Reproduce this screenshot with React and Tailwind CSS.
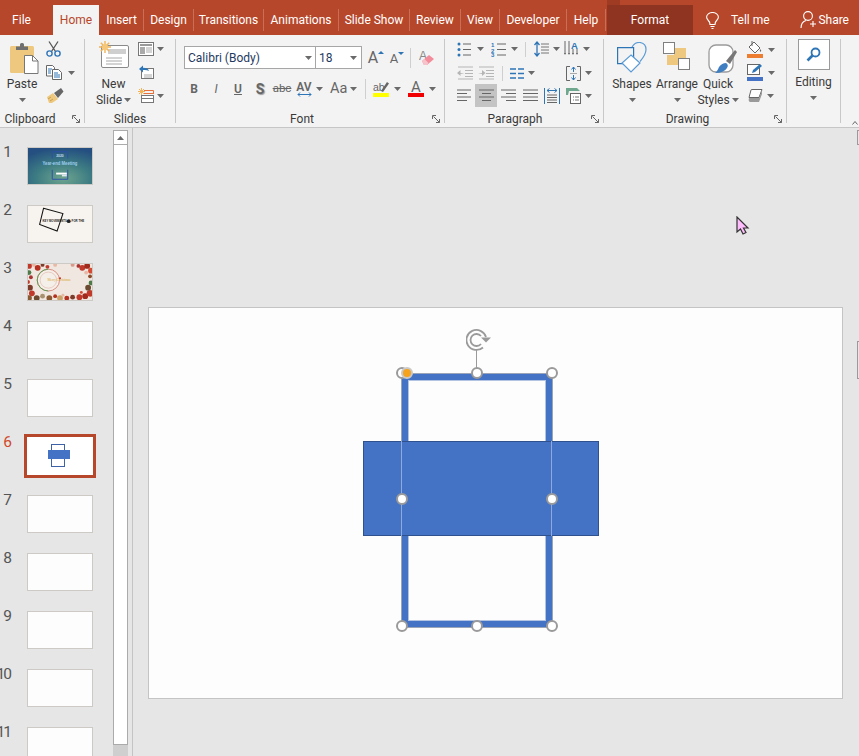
import React from "react";

const Caret = ({ className = "" }) => (
  <svg width="7" height="4" viewBox="0 0 7 4" className={`shrink-0 ${className}`}><path d="M0 0h7L3.5 4z" fill="#6a6a6a" /></svg>
);

const VSep = ({ className = "" }) => <div className={`w-px bg-[#cfcfcf] shrink-0 ${className}`} />;

const Launcher = () => (
  <svg width="9" height="9" viewBox="0 0 9 9" className="shrink-0">
    <path d="M.5 4V.5H4M1.5 1.5l6 6M7.5 4v3.500H4" fill="none" stroke="#666" strokeWidth="1" />
  </svg>
);

const Group = ({ label, w, launcher, labelClass = "", children }) => (
  <div className={`flex flex-col shrink-0 h-[84px] mt-[4px] border-r border-[#c8c8c8] ${w}`}>
    <div className="h-[72px] flex shrink-0">{children}</div>
    <div className="flex items-center h-[16px] shrink-0">
      <span className={`flex-1 text-center text-[12px] leading-[16px] text-[#3a3a3a] ${labelClass}`}>{label}</span>
      {launcher && (
        <span className="w-[12px] flex justify-start shrink-0"><Launcher /></span>
      )}
    </div>
  </div>
);

const Paste = () => (
  <svg width="29" height="32" viewBox="0 0 29 32">
    <rect x="0" y="4" width="24" height="27" rx="1.5" fill="#EDC87E" />
    <path d="M6 8V4.5h4V2.5q0-1.5 1.5-1.5h1Q14 1 14 2.500V4.500h4V8z" fill="#6f6f6f" />
    <path d="M14.500 13.500h8l5.500 5.500v12.500h-13.500z" fill="#fff" stroke="#777" />
    <path d="M22.500 13.500V19H28" fill="none" stroke="#777" />
  </svg>
);
const Scissors = () => (
  <svg width="15" height="16" viewBox="0 0 15 16">
    <path d="M3 .5l6.500 10M12 .5L5.500 10.500" stroke="#555" strokeWidth="1.300" fill="none" />
    <circle cx="3.500" cy="12.500" r="2.600" fill="none" stroke="#2E75B6" strokeWidth="1.400" />
    <circle cx="11.500" cy="12.500" r="2.600" fill="none" stroke="#2E75B6" strokeWidth="1.400" />
  </svg>
);
const Copy = () => (
  <svg width="16" height="15" viewBox="0 0 16 15">
    <path d="M.5.500h6l2 2V11H.5z" fill="#fff" stroke="#666" />
    <path d="M6.500 4.500h6l3 3v7h-9z" fill="#fff" stroke="#666" />
    <path d="M2 4h4M2 6h3M2 8h3M8 8h4M8 10h6M8 12h6" stroke="#2E75B6" />
  </svg>
);
const Brush = () => (
  <svg width="18" height="15" viewBox="0 0 18 15">
    <path d="M1 9l6-4 5 6-6 4H3z" fill="#EDC87E" />
    <path d="M2 11l3-2M4 13l3-2" stroke="#c9a04e" />
    <path d="M8 5l7-5 2.500 3.500L12 10z" fill="#666" />
  </svg>
);
const NewSlide = () => (
  <svg width="30" height="27" viewBox="0 0 30 27">
    <rect x="2.500" y="4.500" width="27" height="22" rx="1.500" fill="#fff" stroke="#8a8a8a" />
    <rect x="9" y="8" width="18" height="5" fill="#cfcfcf" />
    <path d="M7 17h16M7 20h16M7 23h16" stroke="#a8a8a8" />
    <g stroke="#F2B457" strokeWidth="1.400">
      <path d="M6 0v12M0 6h12M1.800 1.800l8.400 8.400M10.200 1.800l-8.400 8.400" />
    </g>
    <circle cx="6" cy="6" r="3" fill="#F5C77A" />
  </svg>
);
const LayoutIcon = () => (
  <svg width="16" height="14" viewBox="0 0 16 14">
    <rect x=".5" y=".5" width="15" height="13" fill="#fff" stroke="#777" />
    <rect x="2" y="2" width="12" height="2" fill="#999" />
    <rect x="2" y="5" width="5" height="7" fill="#aaa" />
    <path d="M8 6h6M8 8h6M8 10h6" stroke="#aaa" />
  </svg>
);
const ResetIcon = () => (
  <svg width="16" height="14" viewBox="0 0 16 14">
    <rect x="3.500" y="3.500" width="12" height="10" fill="#fff" stroke="#777" />
    <path d="M6 10h8M6 12h8" stroke="#aaa" />
    <path d="M1 4l4-3.500v2.300q5 0 6 3.200-2.500-1.500-6-1v2.500z" fill="#2E75B6" />
  </svg>
);
const SectionIcon = () => (
  <svg width="16" height="15" viewBox="0 0 16 15">
    <g stroke="#F2B457"><path d="M3.500 0v7M0 3.500h7M1 1l5 5M6 1L1 6" /></g>
    <path d="M6 2.500h9.500V6M6 5.500h9" stroke="#E8703A" fill="none" />
    <rect x="3.500" y="7.500" width="12" height="7" fill="#fff" stroke="#777" />
    <path d="M3.500 10.500h12" stroke="#777" />
  </svg>
);
const Eraser = () => (
  <svg width="16" height="16" viewBox="0 0 16 16">
    <text x="0" y="10" fontSize="12" fill="#888" fontFamily="Liberation Sans">A</text>
    <path d="M3 11l7-6 5 4-7 6H5z" fill="#F28B9A" />
    <path d="M3 11l2.500-2 4 4L8 15H5z" fill="#F7C3CB" />
  </svg>
);
const Bullets = () => (
  <svg width="14" height="15" viewBox="0 0 14 15">
    <g fill="#2E75B6"><circle cx="2" cy="2" r="1.500" /><circle cx="2" cy="7.500" r="1.500" /><circle cx="2" cy="13" r="1.500" /></g>
    <path d="M6 2h8M6 7.500h8M6 13h8" stroke="#666" />
  </svg>
);
const Numbers = () => (
  <svg width="15" height="15" viewBox="0 0 15 15">
    <g fill="#2E75B6" fontSize="6" fontWeight="700" fontFamily="Liberation Sans"><text x="0" y="5">1</text><text x="0" y="10.500">2</text><text x="0" y="15">3</text></g>
    <path d="M6 2h9M6 7.500h9M6 13h9" stroke="#666" />
  </svg>
);
const Spacing = () => (
  <svg width="15" height="16" viewBox="0 0 15 16">
    <path d="M3 1v14M.5 4L3 1l2.500 3M.5 12L3 15l2.500-3" fill="none" stroke="#2E75B6" strokeWidth="1.300" />
    <path d="M7 3h8M7 6h8M7 9h8M7 12h8" stroke="#777" />
  </svg>
);
const TextDir = () => (
  <svg width="15" height="16" viewBox="0 0 15 16">
    <path d="M1 0v13M5 0v13M9 8v5M13 8v5" stroke="#666" />
    <path d="M0 12l1 2 1-2zM4 12l1 2 1-2zM8 12l1 2 1-2zM12 12l1 2 1-2z" fill="#666" />
    <text x="7" y="7.500" fontSize="9.500" fontWeight="700" fill="#2E75B6" fontFamily="Liberation Sans">A</text>
  </svg>
);
const Indent = ({ flip }) => (
  <svg width="16" height="14" viewBox="0 0 16 14">
    <path d="M1 1h15M8 4.500h8M8 7.500h8M8 10.500h8M1 13h15" stroke="#b5b5b5" />
    <path d={flip ? "M0 7h4V4l3.500 3L4 10V8z" : "M7.500 7h-4V4L0 7l3.500 3V8z"} fill="#b5b5b5" />
  </svg>
);
const Columns = () => (
  <svg width="14" height="11" viewBox="0 0 14 11">
    <path d="M0 1h6M8 1h6M0 5.500h6M8 5.500h6M0 10h6M8 10h6" stroke="#2E75B6" strokeWidth="1.300" />
  </svg>
);
const AlignText = () => (
  <svg width="15" height="15" viewBox="0 0 15 15">
    <path d="M4 .5H.5v14H4M11 .500h3.500v14H11" fill="none" stroke="#666" />
    <path d="M7.500 1v5M5.500 3.500l2-2.500 2 2.500M7.500 14V9M5.500 11.500l2 2.500 2-2.500" fill="none" stroke="#2E75B6" />
    <path d="M4 7.500h7" stroke="#aaa" />
  </svg>
);
const Align = ({ d }) => (
  <svg width="15" height="13" viewBox="0 0 15 13"><path d={d} stroke="#666" strokeWidth="1" fill="none" /></svg>
);
const Distribute = () => (
  <svg width="16" height="16" viewBox="0 0 16 16">
    <path d="M.5 0v16M15.500 0v16" stroke="#2E75B6" />
    <path d="M3 2.500h10M3 2.500l2.500-2M3 2.500l2.500 2M13 2.500l-2.500-2M13 2.500l-2.500 2" fill="none" stroke="#2E75B6" />
    <path d="M3 7h10M3 9.500h10M3 12h10M3 14.500h10" stroke="#666" />
  </svg>
);
const SmartArt = () => (
  <svg width="15" height="17" viewBox="0 0 15 17">
    <path d="M0 1h11l3 3H3l-1 4H0z" fill="#6FA78F" />
    <rect x="4.500" y="6.500" width="10" height="10" fill="#fff" stroke="#666" />
    <path d="M7 10h1M9 10h4M7 13h1M9 13h4" stroke="#777" />
  </svg>
);
const Shapes = () => (
  <svg width="30" height="31" viewBox="0 0 30 31">
    <path d="M15 5q3-5 8-4.500 6 .800 6 7 0 5-6 12" fill="none" stroke="#5B9BD5" strokeWidth="1.200" />
    <path d="M.6 5.600h16v16H.6z" fill="none" stroke="#2E75B6" strokeWidth="1.200" />
    <path d="M14 13l9 8-9 9-9-9z" fill="#fff" stroke="#5B9BD5" strokeWidth="1.200" />
  </svg>
);
const Arrange = () => (
  <svg width="28" height="28" viewBox="0 0 28 28">
    <rect x="11" y="6" width="12" height="12" fill="#EDC87E" />
    <rect x="4" y="13" width="12" height="10" fill="#EDC87E" />
    <rect x=".5" y=".5" width="11" height="11" fill="#fff" stroke="#7f7f7f" />
    <rect x="15.500" y="16.500" width="11" height="11" fill="#fff" stroke="#7f7f7f" />
  </svg>
);
const QuickStyles = () => (
  <svg width="30" height="30" viewBox="0 0 30 30">
    <rect x="1" y="1" width="24" height="27" rx="7" fill="#fff" stroke="#9a9a9a" strokeWidth="1.300" />
    <path d="M18 17L27 6l2 2-7 12z" fill="#777" />
    <path d="M7 29q2-1 4-6 3-4 7-4 3 2 1 5-3 5-12 5z" fill="#3F7FC1" />
  </svg>
);
const FillIcon = () => (
  <svg width="16" height="17" viewBox="0 0 16 17">
    <path d="M7 1l6 6-5 5-6-6z" fill="#fff" stroke="#666" />
    <path d="M5 0v5" stroke="#666" />
    <path d="M13.500 8q1.500 2 0 3-1.500-1-0-3z" fill="#666" />
    <rect x="0" y="13" width="16" height="4" fill="#ED7D31" />
  </svg>
);
const LineIcon = () => (
  <svg width="16" height="17" viewBox="0 0 16 17">
    <rect x=".5" y=".5" width="12" height="10" fill="#fff" stroke="#666" />
    <path d="M5 9l1-3 7-6 2 2-7 6z" fill="#2E75B6" />
    <rect x="0" y="13" width="16" height="4" fill="#4472C4" />
  </svg>
);
const Effects = () => (
  <svg width="16" height="14" viewBox="0 0 16 14">
    <path d="M4 1q0-.5 1-.500h10l-3 8H2z" fill="#fff" stroke="#666" />
    <path d="M2 9h10l3-8v4l-3 8H3q-2-1-1-4z" fill="#9a9a9a" />
  </svg>
);
const Highlight = () => (
  <svg width="16" height="12" viewBox="0 0 16 12">
    <text x="0" y="10" fontSize="10.500" fill="#666" fontFamily="Liberation Sans">ab</text>
    <path d="M8 10L14 1l2 1.500-6 8.500z" fill="#666" />
  </svg>
);
const Search = () => (
  <svg width="15" height="15" viewBox="0 0 15 15">
    <circle cx="9.500" cy="5.500" r="4" fill="#fff" stroke="#2E75B6" strokeWidth="1.800" />
    <path d="M6.500 8.500L1.500 13.500" stroke="#2E75B6" strokeWidth="2.600" />
  </svg>
);
const Bulb = () => (
  <svg width="13" height="17" viewBox="0 0 13 17" fill="none" stroke="#fff" strokeWidth="1.100">
    <path d="M4 12.500Q4 10 2 8 .6 6.500.6 5a5.900 4.500 0 0 1 11.800 0Q12.400 6.500 11 8q-2 2-2 4.500z" />
    <path d="M4.500 14.500h4M5.500 16.500h2" />
  </svg>
);
const UserPlus = () => (
  <svg width="16" height="18" viewBox="0 0 16 18" fill="none" stroke="#fff" strokeWidth="1.100">
    <circle cx="8" cy="5" r="4.400" />
    <path d="M1 17q0-6 5-7.500M13 10v6M10 13h6" />
  </svg>
);

const Cell = ({ w, className = "", children }) => (
  <span className={`flex items-center justify-center shrink-0 ${w} ${className}`}>{children}</span>
);

const Ribbon = () => (
  <div className="flex h-[93px] bg-[#f3f3f3] border-b border-[#c6c6c6] text-[12px] text-[#3a3a3a] overflow-hidden">
    <Group label="Clipboard" w="w-[85px]" launcher labelClass="mr-[12px]">
      <div className="w-[44px] flex flex-col items-center pt-[3px]">
        <span className="ml-[5px]"><Paste /></span>
        <span className="leading-[16px] mt-[2px]">Paste</span>
        <Caret className="mt-[6px]" />
      </div>
      <div className="flex flex-col gap-[8px] pt-[2px] ml-[2px]">
        <div className="h-[16px]"><Scissors /></div>
        <div className="h-[15px] flex items-center"><Copy /><Caret className="ml-[6px]" /></div>
        <div className="h-[15px]"><Brush /></div>
      </div>
    </Group>
    <Group label="Slides" w="w-[91px]">
      <div className="w-[49px] ml-[4px] flex flex-col items-center pt-[2px]">
        <NewSlide />
        <span className="leading-[16px] mt-[8px]">New</span>
        <span className="leading-[16px] flex items-center gap-[2px]">Slide<Caret /></span>
      </div>
      <div className="flex flex-col gap-[9px] pt-[3px]">
        <div className="h-[14px] flex items-center"><LayoutIcon /><Caret className="ml-[3px]" /></div>
        <div className="h-[14px]"><ResetIcon /></div>
        <div className="h-[15px] flex items-center"><SectionIcon /><Caret className="ml-[3px]" /></div>
      </div>
    </Group>
    <Group label="Font" w="w-[269px]" launcher labelClass="mr-[4px]">
      <div className="flex flex-col pl-[8px] pt-[7px]">
        <div className="flex items-center h-[23px]">
          <div className="w-[132px] h-[23px] bg-white border border-[#a6a6a6] flex items-center justify-between pl-[3px] pr-[3px] text-[#1f3a5f]">
            Calibri (Body)<Caret />
          </div>
          <div className="w-[47px] h-[23px] -ml-px bg-white border border-[#a6a6a6] flex items-center justify-between pl-[3px] pr-[4px] text-[#1f3a5f]">
            18<Caret />
          </div>
          <Cell w="w-[16px]" className="ml-[6px] text-[16px] text-[#666]">A<svg width="6" height="3" viewBox="0 0 6 3" className="mb-[11px] shrink-0"><path d="M0 3l3-3 3 3z" fill="#2E75B6" /></svg></Cell>
          <Cell w="w-[14px]" className="ml-[6px] text-[13px] text-[#666] pt-[3px]">A<svg width="6" height="3" viewBox="0 0 6 3" className="mb-[11px] shrink-0"><path d="M0 0l3 3 3-3z" fill="#2E75B6" /></svg></Cell>
          <VSep className="h-[20px] ml-[6px]" />
          <span className="ml-[8px]"><Eraser /></span>
        </div>
        <div className="flex items-center h-[18px] mt-[11px] -ml-[1px] text-[#666]">
          <Cell w="w-[22px]" className="font-bold">B</Cell>
          <Cell w="w-[22px]" className="italic">I</Cell>
          <Cell w="w-[22px]" className="underline font-semibold">U</Cell>
          <Cell w="w-[22px]" className="font-bold text-[14px] [text-shadow:1px_1px_1px_#999]">S</Cell>
          <Cell w="w-[22px]" className="line-through text-[11.500px]">abc</Cell>
          <span className="flex flex-col items-center w-[22px] shrink-0 leading-[10px] text-[12px]">
            <span className="leading-[10px] font-semibold">AV</span>
            <svg width="15" height="5" viewBox="0 0 15 5"><path d="M1 2.500h13M3 .5L1 2.500l2 2M12 .5l2 2-2 2" fill="none" stroke="#2E75B6" /></svg>
          </span>
          <Caret className="ml-[1px]" />
          <span className="ml-[7px] text-[14.500px] w-[17px] shrink-0">Aa</span>
          <Caret className="ml-[3px]" />
          <VSep className="h-[20px] ml-[8px]" />
          <span className="ml-[7px] w-[16px] flex flex-col items-center shrink-0">
            <Highlight />
            <span className="w-[16px] h-[4px] bg-[#FFFF00]" />
          </span>
          <Caret className="ml-[5px]" />
          <span className="ml-[7px] w-[16px] flex flex-col items-center shrink-0">
            <span className="text-[15px] leading-[12px] h-[12px]">A</span>
            <span className="w-[16px] h-[4px] bg-[#F00000]" />
          </span>
          <Caret className="ml-[5px]" />
        </div>
      </div>
    </Group>
    <Group label="Paragraph" w="w-[159px]" launcher labelClass="mr-[6px]">
      <div className="flex flex-col pl-[12px] pt-[2px]">
        <div className="flex items-center h-[16px]">
          <Bullets /><Caret className="ml-[6px]" />
          <span className="ml-[7px]"><Numbers /></span><Caret className="ml-[5px]" />
          <VSep className="h-[15px] ml-[7px]" />
          <span className="ml-[8px]"><Spacing /></span><Caret className="ml-[4px]" />
          <span className="ml-[4px]"><TextDir /></span><Caret className="ml-[4px]" />
        </div>
        <div className="flex items-center h-[16px] mt-[8px]">
          <Indent /><span className="ml-[5px]"><Indent flip /></span>
          <VSep className="h-[15px] ml-[8px]" />
          <span className="ml-[7px]"><Columns /></span><Caret className="ml-[4px]" />
          <span className="ml-[31px]"><AlignText /></span><Caret className="ml-[4px]" />
        </div>
        <div className="flex items-center h-[23px] mt-[3px]">
          <Align d="M0 1h14M0 4.500h10M0 8h14M0 11.500h10" />
          <span className="ml-[3px] w-[22px] h-[23px] bg-[#c4c4c4] flex items-center justify-center"><Align d="M0 1h15M3 4.500h9M0 8h15M3 11.500h9" /></span>
          <span className="ml-[4px]"><Align d="M0 1h15M5 4.500h10M0 8h15M5 11.500h10" /></span>
          <span className="ml-[7px]"><Align d="M0 1h15M0 4.500h15M0 8h15M0 11.500h15" /></span>
          <span className="ml-[6px]"><Distribute /></span>
          <span className="ml-[6px]"><SmartArt /></span><Caret className="ml-[4px]" />
        </div>
      </div>
    </Group>
    <Group label="Drawing" w="w-[183px]" launcher labelClass="mr-[3px]">
      <div className="w-[46px] ml-[5px] flex flex-col items-center pt-[3px]">
        <Shapes />
        <span className="leading-[16px] mt-[3px]">Shapes</span>
        <Caret className="mt-[6px]" />
      </div>
      <div className="w-[44px] flex flex-col items-center pt-[3px]">
        <Arrange />
        <span className="leading-[16px] mt-[6px]">Arrange</span>
        <Caret className="mt-[6px]" />
      </div>
      <div className="w-[38px] flex flex-col items-center pt-[5px]">
        <span className="ml-[10px]"><QuickStyles /></span>
        <span className="leading-[16px] mt-[2px]">Quick</span>
        <span className="leading-[16px] flex items-center gap-[2px] whitespace-nowrap">Styles<Caret /></span>
      </div>
      <div className="flex flex-col gap-[6px] pt-[2px] ml-[10px]">
        <div className="h-[17px] flex items-center"><FillIcon /><Caret className="ml-[5px]" /></div>
        <div className="h-[17px] flex items-center"><LineIcon /><Caret className="ml-[5px]" /></div>
        <div className="h-[15px] mt-[1px] flex items-center"><Effects /><Caret className="ml-[4px]" /></div>
      </div>
    </Group>
    <Group label="" w="w-[54px]">
      <div className="w-[53px] flex flex-col items-center">
        <div className="w-[32px] h-[31px] bg-white border border-[#9a9a9a] flex items-center justify-center"><Search /></div>
        <span className="leading-[16px] mt-[4px]">Editing</span>
        <Caret className="mt-[6px]" />
      </div>
    </Group>
    <div className="flex-1 flex items-end justify-end pb-[2px] pr-[1px]">
      <svg width="6" height="4" viewBox="0 0 6 4"><path d="M.5 3.500l2.500-3 2.500 3" fill="none" stroke="#666" /></svg>
    </div>
  </div>
);

const TabSep = () => <div className="w-px h-[22px] mb-[4px] bg-[#c96f57] shrink-0" />;
const Tab = ({ w, children }) => (
  <div className={`h-[30px] flex items-center justify-center shrink-0 whitespace-nowrap ${w}`}>{children}</div>
);

const TitleBar = () => (
  <div className="flex items-end h-[35px] bg-[#B7472A] text-white text-[12px]">
    <Tab w="w-[43px]">File</Tab>
    <div className="w-[10px]" />
    <Tab w="w-[46px] bg-[#f3f3f3] text-[#B7472A]">Home</Tab>
    <Tab w="w-[43px] ml-[1px]">Insert</Tab><TabSep />
    <Tab w="w-[49px]">Design</Tab><TabSep />
    <Tab w="w-[69px]">Transitions</Tab><TabSep />
    <Tab w="w-[74px]">Animations</Tab><TabSep />
    <Tab w="w-[70px]">Slide Show</Tab><TabSep />
    <Tab w="w-[50px]">Review</Tab><TabSep />
    <Tab w="w-[38px]">View</Tab><TabSep />
    <Tab w="w-[66px]">Developer</Tab><TabSep />
    <Tab w="w-[38px]">Help</Tab><TabSep />
    <div className="relative w-[86px] h-[30px] bg-[#8F3420] flex items-center justify-center shrink-0 ml-[1px]">
      <span className="absolute left-0 -top-[5px] w-[13px] h-[5px] bg-[#9E3B22]" />
      Format
    </div>
    <span className="ml-[13px] mb-[6px] shrink-0"><Bulb /></span>
    <span className="ml-[12px] h-[30px] flex items-center shrink-0">Tell me</span>
    <span className="ml-auto mr-[10px] h-[30px] flex items-center gap-[2px] shrink-0"><UserPlus />Share</span>
  </div>
);

const Thumb1 = () => (
  <svg viewBox="0 0 66 38" className="w-full h-full block" preserveAspectRatio="none">
    <defs>
      <radialGradient id="t1" cx="55%" cy="85%" r="85%">
        <stop offset="0" stopColor="#6FA58E" /><stop offset="0.5" stopColor="#3D7C83" /><stop offset="1" stopColor="#244F80" />
      </radialGradient>
    </defs>
    <rect width="66" height="38" fill="url(#t1)" />
    <path d="M25 11V4h16v7M25 23v10h16V23" fill="none" stroke="#2F4FA8" strokeWidth="1" />
    <text x="33" y="9" fontSize="3.500" fontWeight="700" fill="#c5dcf2" textAnchor="middle" fontFamily="Liberation Sans">2020</text>
    <text x="33" y="18" fontSize="5" fontWeight="700" fill="#9fcdf0" textAnchor="middle" textLength="36" lengthAdjust="spacingAndGlyphs" fontFamily="Liberation Sans">Year-end Meeting</text>
    <rect x="29" y="26" width="11" height="2" fill="#fff" />
    <rect x="35" y="28" width="5" height="2" fill="#dfe8ee" />
  </svg>
);
const Thumb2 = () => (
  <svg viewBox="0 0 66 38" className="w-full h-full block" preserveAspectRatio="none">
    <rect width="66" height="38" fill="#F7F3EE" />
    <path d="M16 2.500l20 5.500-6 18.500-18-7z" fill="none" stroke="#111" strokeWidth="1.100" />
    <text x="15" y="17" fontSize="3" fontWeight="700" fill="#222" textLength="25" lengthAdjust="spacingAndGlyphs" fontFamily="Liberation Sans">KEY MOVEMENTS</text>
    <circle cx="42" cy="16" r="2" fill="#222" />
    <text x="45" y="17" fontSize="3" fontWeight="700" fill="#222" textLength="13" lengthAdjust="spacingAndGlyphs" fontFamily="Liberation Sans">FOR THE</text>
  </svg>
);
const Thumb3 = () => {
  const dots = [[1,2,"#c0392b",3],[6,1,"#e7b9a4",2],[10,4,"#b5301f",3],[15,1,"#7d3b2a",2],[20,3,"#c0392b",2],[28,1,"#e7b9a4",2],[46,1,"#d9998a",2],[52,2,"#a33",2],[56,4,"#c0392b",3],[61,2,"#a02a1c",3],[65,7,"#d44a33",3],[60,9,"#e8b7a5",2],[64,13,"#8a4a2a",2],[1,9,"#4e7a4a",2.500],[3,14,"#a33",2],[0,19,"#c0392b",2],[2,25,"#7d3b2a",3],[4,31,"#c0392b",3],[1,36,"#8a5a33",3],[9,36,"#6b4a2f",3],[15,34,"#a89070",2.500],[22,36,"#8a5a33",3],[28,34,"#b5301f",2],[33,36,"#c9a36a",3],[40,36,"#b5301f",2.500],[46,35,"#7d3b2a",2.500],[53,35,"#c0392b",3],[59,34,"#a02a1c",3],[64,31,"#c0392b",3.500],[62,25,"#6b4a2f",3],[65,20,"#4e7a4a",2.500],[55,30,"#d44a33",1.500],[36,33,"#e7b9a4",1.500]];
  return (
    <svg viewBox="0 0 66 38" className="w-full h-full block" preserveAspectRatio="none">
      <rect width="66" height="38" fill="#EFE7E0" />
      {dots.map(([x, y, c, r], i) => <circle key={i} cx={x} cy={y} r={r} fill={c} />)}
      <circle cx="21" cy="17" r="11.500" fill="#f5efe9" stroke="#D98A80" strokeWidth="1" />
      <path d="M21 5.500a11.500 11.500 0 0 0 0 23" fill="none" stroke="#5E9A55" strokeWidth="1" />
      <circle cx="21" cy="17" r="8.500" fill="none" stroke="#E3B9AF" strokeWidth=".7" />
      <text x="20" y="17.500" fontSize="4" fill="#D9A62E" textLength="24" lengthAdjust="spacingAndGlyphs" fontFamily="Liberation Serif">Merry Christmas</text>
      <circle cx="33" cy="15" r="1.100" fill="#c0392b" />
    </svg>
  );
};
const Thumb6 = () => (
  <svg viewBox="0 0 66 38" className="w-full h-full block" preserveAspectRatio="none">
    <rect width="66" height="38" fill="#fff" />
    <rect x="24.500" y="7.500" width="13" height="22" fill="#fff" stroke="#3E62A8" strokeWidth="1" />
    <rect x="21" y="13" width="22" height="9" fill="#4472C4" />
  </svg>
);

const thumbs = { 1: <Thumb1 />, 2: <Thumb2 />, 3: <Thumb3 />, 6: <Thumb6 /> };

const Row = ({ n }) => {
  const sel = n === 6;
  return (
    <div className="flex h-[38px] shrink-0">
      <div className={`w-[12px] -mt-[3px] flex justify-end text-[15.500px] leading-[16px] ${n > 9 ? "tracking-[-2px] pr-[2px]" : ""} ${sel ? "text-[#D1492A]" : "text-[#555]"}`}>{n}</div>
      <div className={`ml-[15px] w-[66px] h-[38px] shrink-0 bg-[#fdfdfd] ${sel ? "outline-[3px] outline outline-[#B7472A]" : "border border-[#cdc9c4]"}`}>
        {thumbs[n]}
      </div>
    </div>
  );
};

const Scrollbar = () => (
  <div className="w-[15px] flex flex-col pt-[2px] shrink-0">
    <div className="h-[15px] bg-white border border-[#ababab] flex items-center justify-center">
      <svg width="7" height="4" viewBox="0 0 7 4"><path d="M0 4h7L3.500 0z" fill="#6a6a6a" /></svg>
    </div>
    <div className="h-[600px] bg-white border-x border-b border-[#ababab]" />
    <div className="flex-1 bg-[#cfcfcf]" />
  </div>
);

const Sidebar = () => (
  <div className="w-[133px] shrink-0 flex border-r border-[#c4c4c4]">
    <div className="w-[113px] shrink-0 flex flex-col gap-[20px] pt-[19px] overflow-hidden">
      {[1, 2, 3, 4, 5, 6, 7, 8, 9, 10, 11].map((n) => <Row key={n} n={n} />)}
    </div>
    <Scrollbar />
  </div>
);

const Handle = ({ className }) => (
  <div className={`absolute w-[12px] h-[12px] rounded-full bg-white border-2 border-[#9a9a9a] ${className}`} />
);

const Slide = () => (
  <div className="relative w-[695px] h-[392px] bg-[#fdfdfd] border border-[#c4c4c4] shrink-0">
    <div className="absolute left-[253px] top-[66px] w-[150px] h-[253px] border-[6px] border-[#4472C4] shadow-[inset_0_0_0_1px_#b3c3e2,0_0_0_1px_#9aa5b8]" />
    <div className="absolute left-[214px] top-[133px] w-[236px] h-[95px] bg-[#4472C4] border border-[#2F528F]" />
    <div className="absolute left-[252px] top-[133px] w-px h-[95px] bg-[#8fa9d8]" />
    <div className="absolute left-[402px] top-[133px] w-px h-[95px] bg-[#8fa9d8]" />
    <div className="absolute left-[327px] top-[42px] w-px h-[18px] bg-[#9a9a9a]" />
    <svg className="absolute left-[317px] top-[21px]" width="26" height="22" viewBox="0 0 26 22" fill="none" stroke="#9a9a9a">
      <path d="M17 18.500A10 10 0 1 1 20 8" strokeWidth="1.800" />
      <path d="M15 15A6 6 0 1 1 15 7" strokeWidth="1.800" />
      <path d="M15 8.500h10l-5 5z" fill="#9a9a9a" stroke="none" />
    </svg>
    <Handle className="left-[247px] top-[59px]" />
    <Handle className="left-[321.500px] top-[59px]" />
    <Handle className="left-[396.500px] top-[59px]" />
    <Handle className="left-[247px] top-[185px]" />
    <Handle className="left-[396.500px] top-[185px]" />
    <Handle className="left-[247px] top-[312px]" />
    <Handle className="left-[321.500px] top-[312px]" />
    <Handle className="left-[396.500px] top-[312px]" />
    <div className="absolute left-[252px] top-[59px] w-[12px] h-[12px] rounded-full bg-[#F5A31C] border-2 border-[#c9c9c9]" />
  </div>
);

const Workspace = () => (
  <div className="flex flex-1 min-h-0 bg-[#e6e6e6]">
    <Sidebar />
    <div className="relative w-[724px] shrink-0 pl-[15px] pt-[179px]">
      <Slide />
      <svg className="absolute left-[603px] top-[88px]" width="14" height="19" viewBox="0 0 14 19">
        <path d="M1 1v15l3.500-3 2.500 5 3-1.500-2.500-4.500H12z" fill="#FFBDFD" stroke="#333" strokeWidth="1.200" />
      </svg>
    </div>
    <div className="flex-1 flex flex-col pt-[2px] gap-[196px]">
      <div className="h-[15px] border-l border-y border-[#9a9a9a]" />
      <div className="h-[38px] border-l border-y border-[#9a9a9a]" />
    </div>
  </div>
);

export default function App() {
  return (
    <div className="w-[859px] h-[756px] overflow-hidden flex flex-col font-['Roboto','Open_Sans',sans-serif]">
      <TitleBar />
      <Ribbon />
      <Workspace />
    </div>
  );
}
